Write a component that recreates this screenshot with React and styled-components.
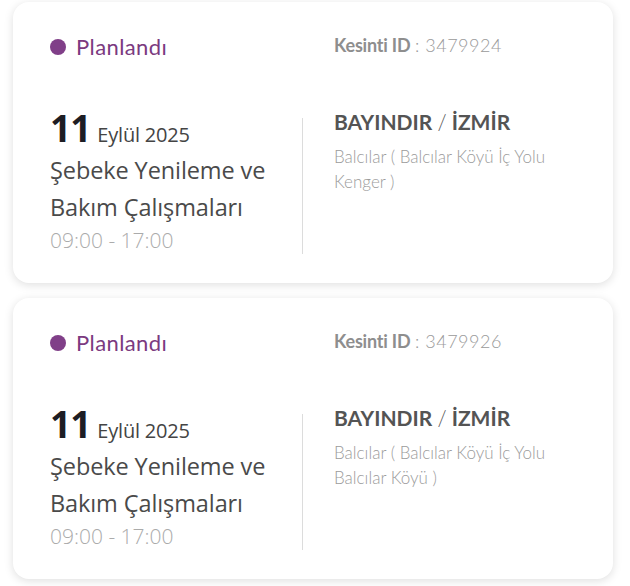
import React from "react";
import styled, { createGlobalStyle } from "styled-components";

const Global = createGlobalStyle`
  html, body { margin: 0; padding: 0; background: #ffffff; }
  body { font-family: "Open Sans", "Noto Sans", sans-serif; }
`;

const Page = styled.div`
  display: flex;
  flex-direction: column;
  gap: 15px;
  padding: 2px 17px 8px 13px;
`;

const Card = styled.div`
  background: #fff;
  border-radius: 16px;
  box-shadow: 0 2px 10px rgba(0, 0, 0, 0.13);
  padding: 31px 36px 30px 37px;
  height: 281px;
  box-sizing: border-box;
  display: flex;
  flex-direction: column;
`;

const TopRow = styled.div`
  display: grid;
  grid-template-columns: 284px 1fr;
  align-items: center;
  height: 26px;
`;

const Status = styled.div`
  display: flex;
  align-items: center;
  gap: 10px;
  color: #7b3a80;
  font-family: "Lato", sans-serif;
  font-size: 22px;
  letter-spacing: 0.4px;
`;

const Dot = styled.span`
  width: 16px;
  height: 16px;
  border-radius: 50%;
  background: #803f88;
  flex: none;
`;

const IdText = styled.div`
  font-family: "Lato", sans-serif;
  font-size: 18px;
  color: #9a9a9a;
  margin-top: -4px;
  b { font-weight: 700; color: #8e8e8e; letter-spacing: -0.2px; }
  span { font-weight: 300; letter-spacing: 0.5px; }
`;

const Body = styled.div`
  display: flex;
  margin-top: 51px;
  flex: 1;
`;

const Left = styled.div`
  width: 253px;
  border-right: 1px solid #dcdcdc;
  box-sizing: border-box;
  margin-top: 8px;
  margin-bottom: 6px;
  display: flex;
  flex-direction: column;
`;

const DateLine = styled.div`
  display: flex;
  align-items: baseline;
  gap: 7px;
  margin-top: -12px;
  line-height: 44px;
`;

const Day = styled.span`
  font-size: 37px;
  font-weight: 700;
  color: #1d1d24;
  letter-spacing: -1px;
`;

const Month = styled.span`
  font-size: 20px;
  color: #444;
  letter-spacing: -0.2px;
`;

const Title = styled.div`
  font-size: 23.5px;
  line-height: 37px;
  color: #4a4a4a;
  letter-spacing: -0.1px;
  margin-top: -5px;
`;

const Time = styled.div`
  font-size: 21px;
  color: #ababab;
  font-weight: 300;
  line-height: 28px;
  letter-spacing: 0px;
`;

const Right = styled.div`
  padding-left: 31px;
  font-family: "Lato", sans-serif;
  display: flex;
  flex-direction: column;
  margin-top: -1px;
`;

const Place = styled.div`
  font-size: 21px;
  font-weight: 700;
  color: #545454;
  line-height: 26px;
  span { font-weight: 300; }
`;

const Address = styled.div`
  margin-top: 9px;
  font-size: 17px;
  font-weight: 300;
  color: #9b9b9b;
  line-height: 25px;
  max-width: 240px;
`;

const items = [
  { id: "3479924", address: "Balcılar ( Balcılar Köyü İç Yolu Kenger )" },
  { id: "3479926", address: "Balcılar ( Balcılar Köyü İç Yolu Balcılar Köyü )" },
];

function OutageCard({ id, address }) {
  return (
    <Card>
      <TopRow>
        <Status>
          <Dot />
          Planlandı
        </Status>
        <IdText>
          <b>Kesinti ID</b> <span>: {id}</span>
        </IdText>
      </TopRow>
      <Body>
        <Left>
          <DateLine>
            <Day>11</Day>
            <Month>Eylül 2025</Month>
          </DateLine>
          <Title>
            Şebeke Yenileme ve
            <br />
            Bakım Çalışmaları
          </Title>
          <Time>09:00 - 17:00</Time>
        </Left>
        <Right>
          <Place>
            BAYINDIR <span>/</span> İZMİR
          </Place>
          <Address>{address}</Address>
        </Right>
      </Body>
    </Card>
  );
}

export default function App() {
  return (
    <>
      <Global />
      <Page>
        {items.map((it) => (
          <OutageCard key={it.id} {...it} />
        ))}
      </Page>
    </>
  );
}
